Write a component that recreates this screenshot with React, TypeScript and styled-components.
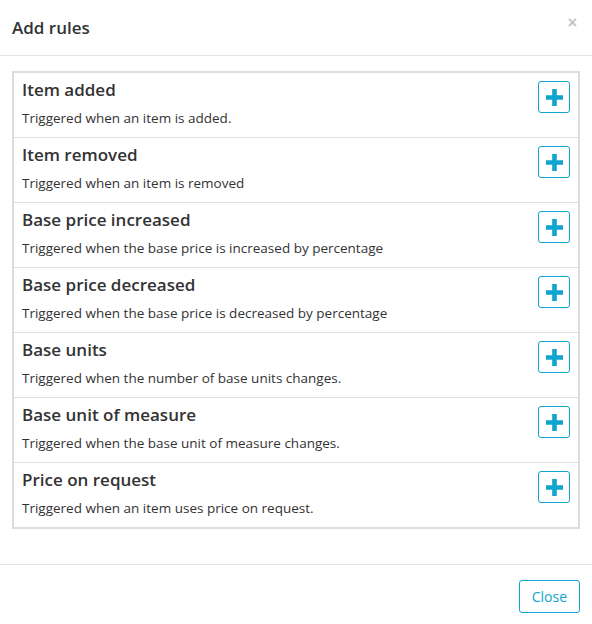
import * as React from 'react'
import styled, { createGlobalStyle } from 'styled-components'

const accent = '#0ea5cf'
const line = '#dddddd'

const GlobalStyle = createGlobalStyle`
  html, body {
    margin: 0;
    padding: 0;
    background: #fff;
  }
  body {
    font-family: 'Open Sans', 'Noto Sans', sans-serif;
    color: #333;
  }
`

const Modal = styled.div`
  width: 592px;
  height: 624px;
  display: flex;
  flex-direction: column;
  background: #fff;
`

const Header = styled.div`
  height: 55px;
  display: flex;
  align-items: center;
  justify-content: space-between;
  padding: 0 15px 0 12px;
  border-bottom: 1px solid #e5e5e5;
  box-sizing: content-box;
`

const Title = styled.h4`
  margin: 0 0 1px;
  font-size: 17px;
  font-weight: 600;
  color: #333;
`

const Dismiss = styled.button`
  border: 0;
  background: none;
  padding: 0;
  margin-top: -10px;
  color: #c4c4c4;
  font-size: 16px;
  font-weight: 700;
  line-height: 1;
  cursor: pointer;
`

const Body = styled.div`
  flex: 1;
  padding: 15px 12px;
`

const RuleList = styled.div`
  border: 2px solid ${line};
`

const Rule = styled.div`
  height: 64px;
  display: flex;
  justify-content: space-between;
  padding: 0 8px;

  & + & {
    border-top: 1px solid ${line};
  }
`

const RuleText = styled.div`
  display: flex;
  flex-direction: column;
`

const RuleName = styled.div`
  font-size: 17px;
  font-weight: 600;
  line-height: 24px;
  margin-top: 5px;
`

const RuleDescription = styled.div`
  font-size: 13.5px;
  line-height: 20px;
  margin-top: 6px;
`

const AddButton = styled.button`
  width: 32px;
  height: 32px;
  margin-top: 8px;
  border: 1px solid ${accent};
  border-radius: 3px;
  background: #fff;
  display: flex;
  align-items: center;
  justify-content: center;
  padding: 0;
  cursor: pointer;
`

const Footer = styled.div`
  height: 60px;
  box-sizing: border-box;
  border-top: 1px solid #e5e5e5;
  display: flex;
  justify-content: flex-end;
  align-items: flex-start;
  padding: 15px 12px 0;
`

const CloseButton = styled.button`
  height: 33px;
  padding: 0 12px;
  border: 1px solid ${accent};
  border-radius: 3px;
  background: #fff;
  color: ${accent};
  font-family: inherit;
  font-size: 14px;
  cursor: pointer;
`

const rules = [
  { name: 'Item added', description: 'Triggered when an item is added.' },
  { name: 'Item removed', description: 'Triggered when an item is removed' },
  {
    name: 'Base price increased',
    description: 'Triggered when the base price is increased by percentage',
  },
  {
    name: 'Base price decreased',
    description: 'Triggered when the base price is decreased by percentage',
  },
  {
    name: 'Base units',
    description: 'Triggered when the number of base units changes.',
  },
  {
    name: 'Base unit of measure',
    description: 'Triggered when the base unit of measure changes.',
  },
  {
    name: 'Price on request',
    description: 'Triggered when an item uses price on request.',
  },
]

const PlusIcon = () => (
  <svg width="17" height="17" viewBox="0 0 17 17">
    <path d="M6.2 0h4.6v6.2H17v4.6h-6.2V17H6.2v-6.2H0V6.2h6.2z" fill={accent} />
  </svg>
)

export default function App() {
  return (
    <>
      <GlobalStyle />
      <Modal>
        <Header>
          <Title>Add rules</Title>
          <Dismiss aria-label="Close">×</Dismiss>
        </Header>
        <Body>
          <RuleList>
            {rules.map((rule) => (
              <Rule key={rule.name}>
                <RuleText>
                  <RuleName>{rule.name}</RuleName>
                  <RuleDescription>{rule.description}</RuleDescription>
                </RuleText>
                <AddButton aria-label={`Add ${rule.name}`}>
                  <PlusIcon />
                </AddButton>
              </Rule>
            ))}
          </RuleList>
        </Body>
        <Footer>
          <CloseButton>Close</CloseButton>
        </Footer>
      </Modal>
    </>
  )
}
